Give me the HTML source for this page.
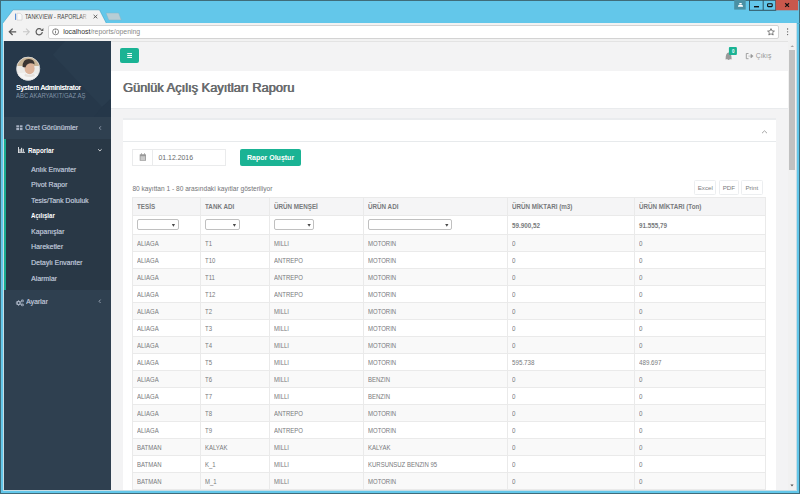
<!DOCTYPE html>
<html><head><meta charset="utf-8">
<style>
*{box-sizing:border-box;margin:0;padding:0}
html,body{width:800px;height:494px;overflow:hidden}
body{position:relative;background:#3f6c7a;font-family:"Liberation Sans",sans-serif;color:#676a6c}
.a{position:absolute}
.t{position:absolute;white-space:nowrap}
#frame{left:1px;top:1px;width:798px;height:492px;background:#63c7ea}
#toolbar{left:3px;top:23px;width:793px;height:18px;background:#f2f2f2}
#addr{left:48px;top:25px;width:731px;height:13.5px;background:#fff;border:1px solid #d3d3d3;border-radius:2px}
#content{left:3.5px;top:41px;width:784px;height:448.5px;background:#f3f3f4;overflow:hidden}
#scroll{left:787.5px;top:41px;width:8.5px;height:448.5px;background:#f1f1f1}
#thumb{left:789px;top:49.5px;width:6px;height:120.5px;background:#c1c1c1}
#side{left:0;top:0;width:107px;height:448.5px;background:#2f4050}
#navhead{left:0;top:0;width:107px;height:75.5px;background:#26384a;overflow:hidden}
#ozet{left:0;top:75.5px;width:107px;height:22px;background:#2f4050}
#rap{left:0;top:97.5px;width:107px;height:151.5px;background:#293846;border-left:2px solid #19aa8d}
.nt{position:absolute;font-size:7.6px;color:#aeb8c8;white-space:nowrap;line-height:8px;text-shadow:0.25px 0 0 currentColor;transform:scaleX(.915);transform-origin:0 0}
#main{left:107px;top:0;width:677px;height:448.5px}
#heading{left:0;top:30px;width:677px;height:38px;background:#fff;border-bottom:1px solid #e9ebed}
#panel{left:12px;top:77px;width:653px;height:400px;background:#fff;border-top:2px solid #eaecee}
#ptitle{left:0;top:0;width:653px;height:21.5px;border-bottom:1px solid #e7eaec}
table{border-collapse:collapse;position:absolute;left:9.5px;top:77px;width:634px;table-layout:fixed;font-size:6.7px;color:#787a7c}
td i,th i{font-style:normal;display:inline-block;transform-origin:0 50%;transform:scaleX(.895)}
th i{transform:scaleX(.95)}
td:nth-child(5) i,td:nth-child(6) i{transform:scaleX(.93)}
td,th{border:1px solid #eaeaea;padding:0 0 0 3.9px;text-align:left;white-space:nowrap;overflow:hidden;line-height:8px}
th{height:18px;background:#f5f5f6;font-weight:bold;font-size:6.6px}
tr.f td{height:19px;background:#fff;padding-left:4px}
tr.f b{font-size:6.3px}
tbody td{height:17px;padding-top:1px}
#rows tr:nth-child(odd) td{background:#f9f9f9}
.sel{display:block;width:42px;height:11px;margin-top:-1.3px;border:1px solid #c0c0c0;border-radius:2px;background:#fff;position:relative}
.sel:after{content:"";position:absolute;right:2.4px;top:3.4px;width:3.6px;height:3px;background:#4a4a4a;clip-path:polygon(0 0,100% 0,50% 100%)}
.btn{position:absolute;top:59.6px;height:15.2px;border:1px solid #eceef0;border-radius:1.5px;background:#fff;font-size:6.2px;color:#7a7c7e;text-align:center;line-height:14px}
</style></head><body>
<div id="frame" class="a"></div>
<!-- tabs & window controls -->
<svg class="a" style="left:0;top:0" width="800" height="41">
  <polyline points="2.5,23.5 13,9.8 99.5,9.8 106.5,23.5 800,23.5" fill="#f2f2f2" stroke="#47a9cc" stroke-width="0.7"/>
  <polygon points="106,13 118.7,13 121.3,20 108.7,20" fill="#b7cdd5" stroke="#7fb5c8" stroke-width="0.5"/>
  <rect x="734.2" y="0" width="11.5" height="9.6" fill="#4a90a4"/>
  <path d="M739.3 3 h2.4 v1.6 h-2.4z M738.5 5 h4 l0.6 1.8 h-5.2z" fill="#fff"/>
  <rect x="749.5" y="-1" width="26.2" height="11.3" fill="none" stroke="#2f5361" stroke-width="1"/>
  <line x1="763.2" y1="0" x2="763.2" y2="10" stroke="#2f5361"/>
  <rect x="775.7" y="0" width="22.5" height="10.3" fill="#c9584c"/>
  <rect x="754" y="6" width="5" height="1.4" fill="#111"/>
  <rect x="767.6" y="3.8" width="4.6" height="2.8" rx="0.6" fill="none" stroke="#111" stroke-width="1.1"/>
  <path d="M785.2 3.2 L789 6.9 M789 3.2 L785.2 6.9" stroke="#111" stroke-width="1.2"/>
  <!-- favicon -->
  <rect x="15" y="13.6" width="1.1" height="6.3" fill="#5a8fd8"/>
  <path d="M17 13.3 h3.2 l1.8 1.8 v5 h-5z" fill="#fafafa" stroke="#c9c9c9" stroke-width="0.6"/>
  <path d="M93.6 14.9 L97.3 18.3 M97.3 14.9 L93.6 18.3" stroke="#555" stroke-width="0.9"/>
</svg>
<div class="t" style="left:25.2px;top:13.1px;font-size:6.6px;color:#444;line-height:8px;transform:scaleX(.81);transform-origin:0 0">TANKVIEW - RAPORLAR</div>
<div class="a" style="left:80px;top:11px;width:9px;height:10px;background:linear-gradient(90deg,rgba(242,242,242,0),#f2f2f2)"></div>
<div class="a" style="left:3px;top:23px;width:794px;height:468px;background:#c6dde5"></div>
<div id="toolbar" class="a"></div>
<svg class="a" style="left:0;top:23px" width="800" height="18">
  <path d="M16.2 8.8 H9.6 M12.6 5.6 L9.3 8.8 L12.6 12" stroke="#5a5a5a" stroke-width="1.3" fill="none"/>
  <path d="M23 8.8 H29.3 M26.1 5.6 L29.3 8.8 L26.1 12" stroke="#c8c8c8" stroke-width="1.1" fill="none"/>
  <path d="M42.3 8.9 A3.1 3.1 0 1 1 41.4 6.6" stroke="#5a5a5a" stroke-width="1.2" fill="none"/>
  <path d="M43.4 5.1 V8 H40.5z" fill="#5a5a5a"/>
</svg>
<div id="addr" class="a"></div>
<svg class="a" style="left:0;top:23px" width="800" height="18">
  <circle cx="55.6" cy="8.8" r="3" stroke="#666" stroke-width="0.8" fill="none"/>
  <rect x="55.2" y="7.8" width="0.8" height="2.6" fill="#666"/>
  <rect x="55.2" y="6.3" width="0.8" height="0.8" fill="#666"/>
  <path d="M771 5.6 L772 7.9 L774.4 8.1 L772.6 9.7 L773.2 12 L771 10.8 L768.8 12 L769.4 9.7 L767.6 8.1 L770 7.9z" fill="none" stroke="#555" stroke-width="0.75"/>
  <circle cx="787.6" cy="6" r="0.65" fill="#555"/>
  <circle cx="787.6" cy="8.8" r="0.65" fill="#555"/>
  <circle cx="787.6" cy="11.6" r="0.65" fill="#555"/>
</svg>
<div class="t" style="left:63.2px;top:28px;font-size:6.9px;line-height:8px;color:#888"><span style="color:#333">localhost</span>/reports/opening</div>
<div id="content" class="a">
  <div id="side" class="a">
    <div id="navhead" class="a">
      <svg class="a" style="left:0;top:0" width="107" height="76">
        <polygon points="61,0 107,0 107,58 98,66 48.8,13.8" fill="#293c4e"/>
        <polygon points="98,66 107,58 107,76 90,76" fill="#253749"/>
      </svg>
    </div>
    <div id="ozet" class="a"></div>
    <div id="rap" class="a"></div>
    <!-- avatar -->
    <svg class="a" style="left:12px;top:15px" width="25" height="26">
      <defs><clipPath id="cp"><circle cx="12.15" cy="12.7" r="11.6"/></clipPath></defs>
      <g clip-path="url(#cp)">
        <rect x="0" y="0" width="25" height="26" fill="#ecebe8"/>
        <rect x="0" y="0" width="25" height="10" fill="#c9b597"/>
        <path d="M0 26 V18 Q6 16 12 17 Q19 17 25 19 V26z" fill="#f4f4f4"/>
        <ellipse cx="13.6" cy="12.4" rx="5" ry="5.9" fill="#dcb39a"/>
        <path d="M6.6 11 Q6.4 3.2 12.8 3 Q18.6 3.2 18.6 8.6 Q16.5 6.8 13 7.4 Q10.5 8 9.3 11.6 Q8 11.2 6.6 11z" fill="#3b3431"/>
        <path d="M9 17.5 Q13 20 18 17.6 L19 20 Q13 22 8.5 20z" fill="#e6e1dc"/>
      </g>
      <circle cx="12.15" cy="12.7" r="11.6" fill="none" stroke="#dcdcdc" stroke-width="0.7"/>
    </svg>
    <div class="nt" style="left:12.6px;top:43px;color:#fff;font-size:7.3px;transform:scaleX(.94);text-shadow:0.35px 0 0 #fff">System Administrator</div>
    <div class="nt" style="left:12.6px;top:51.3px;color:#8193a6;font-size:6.6px;transform:scaleX(.9);text-shadow:none">ABC AKARYAKIT/GAZ AŞ</div>
    <svg class="a" style="left:0;top:75.5px" width="107" height="250">
      <g fill="#a7b1c2">
        <rect x="12.3" y="8.3" width="2.7" height="2.1"/><rect x="15.8" y="8.3" width="2.7" height="2.1"/>
        <rect x="12.3" y="11" width="2.7" height="2.1"/><rect x="15.8" y="11" width="2.7" height="2.1"/>
      </g>
      <path d="M96.9 9.3 L95.3 11 L96.9 12.7" stroke="#a7b1c2" stroke-width="0.8" fill="none"/>
      <g fill="#fff">
        <rect x="14" y="30" width="0.8" height="5.6"/><rect x="14" y="34.9" width="7" height="0.8"/>
        <rect x="15.6" y="32" width="0.9" height="2.9"/><rect x="17.2" y="30.8" width="0.9" height="4.1"/><rect x="18.8" y="31.8" width="0.9" height="3.1"/>
      </g>
      <path d="M94.2 32.3 L95.9 33.9 L97.6 32.3" stroke="#fff" stroke-width="0.8" fill="none"/>
      <g fill="#a7b1c2">
        <circle cx="14.6" cy="186" r="2.2"/>
        <circle cx="18.4" cy="183.9" r="1.4"/>
        <circle cx="18.4" cy="187.9" r="1.4"/>
        <path d="M14.6 183.2 v5.6 M11.8 186 h5.6 M12.6 184 l4 4 M16.6 184 l-4 4" stroke="#a7b1c2" stroke-width="0.9"/>
      </g>
      <circle cx="14.6" cy="186" r="0.9" fill="#2f4050"/>
      <circle cx="18.4" cy="183.9" r="0.5" fill="#2f4050"/>
      <circle cx="18.4" cy="187.9" r="0.5" fill="#2f4050"/>
      <path d="M96.6 182.6 L95 184.3 L96.6 186" stroke="#a7b1c2" stroke-width="0.8" fill="none"/>
    </svg>
    <div class="nt" style="left:21.1px;top:83.1px;font-size:7.5px;transform:scaleX(.92)">Özet Görünümler</div>
    <div class="nt" style="left:24px;top:105.6px;color:#fff;font-weight:bold;font-size:7px;transform:scaleX(.9);text-shadow:none">Raporlar</div>
    <div class="nt" style="left:27.5px;top:124.5px">Anlık Envanter</div>
    <div class="nt" style="left:27.5px;top:140px">Pivot Rapor</div>
    <div class="nt" style="left:27.5px;top:155.5px">Tesis/Tank Doluluk</div>
    <div class="nt" style="left:27.5px;top:170.8px;color:#fff;font-weight:bold;font-size:6.9px;transform:scaleX(.89);text-shadow:none">Açılışlar</div>
    <div class="nt" style="left:27.5px;top:186.5px">Kapanışlar</div>
    <div class="nt" style="left:27.5px;top:202px">Hareketler</div>
    <div class="nt" style="left:27.5px;top:217.5px">Detaylı Envanter</div>
    <div class="nt" style="left:27.5px;top:233.5px">Alarmlar</div>
    <div class="nt" style="left:22px;top:257px;font-size:7.5px;transform:scaleX(.92)">Ayarlar</div>
  </div>
  <div id="main" class="a">
    <div class="a" style="left:9.5px;top:7px;width:19px;height:15px;background:#1ab394;border-radius:2px"></div>
    <svg class="a" style="left:9.5px;top:7px" width="19" height="15">
      <g fill="#fff"><rect x="7.2" y="5.1" width="4.8" height="1"/><rect x="7.2" y="7" width="4.8" height="1"/><rect x="7.2" y="8.9" width="4.8" height="1"/></g>
    </svg>
    <!-- bell & logout -->
    <svg class="a" style="left:606.5px;top:0" width="70" height="30">
      <path d="M8.6 18 Q8.6 12 11.6 11.6 Q14.6 12 14.6 18 L15.3 18.2 L7.9 18.2z" fill="#999"/>
      <rect x="10.8" y="18" width="1.6" height="0.9" fill="#999"/>
      <rect x="11.9" y="6" width="8" height="8" rx="1" fill="#1ab394"/>
      <path d="M31.5 12.5 h-2.2 v5.2 h2.2" stroke="#999" stroke-width="0.9" fill="none"/>
      <path d="M31.3 15.1 h2.6 v-1.9 l2.3 1.9 l-2.3 1.9 v-1.9" fill="#999" stroke="#999" stroke-width="0.5"/>
    </svg>
    <div class="t" style="left:621.5px;top:7.5px;font-size:4.5px;color:#fff;font-weight:bold;line-height:6px">0</div>
    <div class="t" style="left:645.3px;top:11.2px;font-size:6.8px;color:#999;line-height:8px">Çıkış</div>
    <div class="a" style="left:0;top:0;width:677px;height:1px;background:#e3e3e3"></div>
    <div id="heading" class="a">
      <div class="t" style="left:12.3px;top:10px;font-size:12.85px;font-weight:normal;color:#676a6c;line-height:14px;text-shadow:0.4px 0 0 #676a6c,0.8px 0 0 rgba(103,106,108,.6)">Günlük Açılış Kayıtları Raporu</div>
    </div>
    <div id="panel" class="a">
      <div id="ptitle" class="a"></div>
      <svg class="a" style="left:637.8px;top:6.6px" width="10" height="10"><path d="M2 6.2 L4.5 3.8 L7 6.2" stroke="#9a9a9a" stroke-width="0.9" fill="none"/></svg>
      <div class="a" style="left:9.5px;top:29px;width:93.7px;height:16.5px;border:1px solid #eaebec"></div>
      <div class="a" style="left:29.3px;top:29px;width:1px;height:16.5px;background:#eaebec"></div>
      <svg class="a" style="left:16px;top:33px" width="8" height="9">
        <rect x="0.7" y="1.2" width="6.3" height="6.6" rx="0.5" fill="#999"/>
        <rect x="1.5" y="3.2" width="4.7" height="3.9" fill="#c9c9c9"/>
        <rect x="2" y="0.2" width="0.8" height="1.6" fill="#999"/><rect x="5" y="0.2" width="0.8" height="1.6" fill="#999"/>
      </svg>
      <div class="t" style="left:36px;top:34px;font-size:6.9px;line-height:8px;color:#676a6c">01.12.2016</div>
      <div class="a" style="left:117.6px;top:29px;width:61px;height:16.5px;background:#1ab394;border-radius:2px;color:#fff;font-weight:bold;font-size:7px;text-align:center;line-height:18px">Rapor Oluştur</div>
      <div class="t" style="left:9.9px;top:65px;font-size:6.6px;line-height:8px;color:#727476">80 kayıttan 1 - 80 arasındaki kayıtlar gösteriliyor</div>
      <div class="btn" style="left:571.6px;width:22.4px">Excel</div>
      <div class="btn" style="left:596.6px;width:19.6px">PDF</div>
      <div class="btn" style="left:618.5px;width:21.5px">Print</div>
      <table>
        <colgroup><col style="width:68px"><col style="width:69px"><col style="width:94px"><col style="width:144px"><col style="width:127px"><col></colgroup>
        <thead><tr><th><i>TESİS</i></th><th><i>TANK ADI</i></th><th><i>ÜRÜN MENŞEİ</i></th><th><i>ÜRÜN ADI</i></th><th><i>ÜRÜN MİKTARI (m3)</i></th><th><i>ÜRÜN MİKTARI (Ton)</i></th></tr></thead>
        <tbody>
        <tr class="f"><td><span class="sel" style="width:41.6px"></span></td><td><span class="sel" style="width:34.6px"></span></td><td><span class="sel" style="width:40.3px"></span></td><td><span class="sel" style="width:84px"></span></td><td><b>59.900,52</b></td><td><b>91.555,79</b></td></tr>
        </tbody>
        <tbody id="rows">
        <tr><td><i>ALIAGA</i></td><td><i>T1</i></td><td><i>MILLI</i></td><td><i>MOTORIN</i></td><td><i>0</i></td><td><i>0</i></td></tr>
        <tr><td><i>ALIAGA</i></td><td><i>T10</i></td><td><i>ANTREPO</i></td><td><i>MOTORIN</i></td><td><i>0</i></td><td><i>0</i></td></tr>
        <tr><td><i>ALIAGA</i></td><td><i>T11</i></td><td><i>ANTREPO</i></td><td><i>MOTORIN</i></td><td><i>0</i></td><td><i>0</i></td></tr>
        <tr><td><i>ALIAGA</i></td><td><i>T12</i></td><td><i>ANTREPO</i></td><td><i>MOTORIN</i></td><td><i>0</i></td><td><i>0</i></td></tr>
        <tr><td><i>ALIAGA</i></td><td><i>T2</i></td><td><i>MILLI</i></td><td><i>MOTORIN</i></td><td><i>0</i></td><td><i>0</i></td></tr>
        <tr><td><i>ALIAGA</i></td><td><i>T3</i></td><td><i>MILLI</i></td><td><i>MOTORIN</i></td><td><i>0</i></td><td><i>0</i></td></tr>
        <tr><td><i>ALIAGA</i></td><td><i>T4</i></td><td><i>MILLI</i></td><td><i>MOTORIN</i></td><td><i>0</i></td><td><i>0</i></td></tr>
        <tr><td><i>ALIAGA</i></td><td><i>T5</i></td><td><i>MILLI</i></td><td><i>MOTORIN</i></td><td><i>595.738</i></td><td><i>489.697</i></td></tr>
        <tr><td><i>ALIAGA</i></td><td><i>T6</i></td><td><i>MILLI</i></td><td><i>BENZIN</i></td><td><i>0</i></td><td><i>0</i></td></tr>
        <tr><td><i>ALIAGA</i></td><td><i>T7</i></td><td><i>MILLI</i></td><td><i>BENZIN</i></td><td><i>0</i></td><td><i>0</i></td></tr>
        <tr><td><i>ALIAGA</i></td><td><i>T8</i></td><td><i>ANTREPO</i></td><td><i>MOTORIN</i></td><td><i>0</i></td><td><i>0</i></td></tr>
        <tr><td><i>ALIAGA</i></td><td><i>T9</i></td><td><i>ANTREPO</i></td><td><i>MOTORIN</i></td><td><i>0</i></td><td><i>0</i></td></tr>
        <tr><td><i>BATMAN</i></td><td><i>KALYAK</i></td><td><i>MILLI</i></td><td><i>KALYAK</i></td><td><i>0</i></td><td><i>0</i></td></tr>
        <tr><td><i>BATMAN</i></td><td><i>K_1</i></td><td><i>MILLI</i></td><td><i>KURSUNSUZ BENZIN 95</i></td><td><i>0</i></td><td><i>0</i></td></tr>
        <tr><td><i>BATMAN</i></td><td><i>M_1</i></td><td><i>MILLI</i></td><td><i>MOTORIN</i></td><td><i>0</i></td><td><i>0</i></td></tr>
        </tbody>
      </table>
    </div>
  </div>
</div>
<div id="scroll" class="a"></div>
<svg class="a" style="left:787.5px;top:41px" width="9" height="449">
  <path d="M2.6 6 L4.3 4.2 L6 6z" fill="#a3a3a3"/>
  <path d="M2.4 443.6 L4 445.4 L5.6 443.6z" fill="#505050"/>
</svg>
<div id="thumb" class="a"></div>
</body></html>
